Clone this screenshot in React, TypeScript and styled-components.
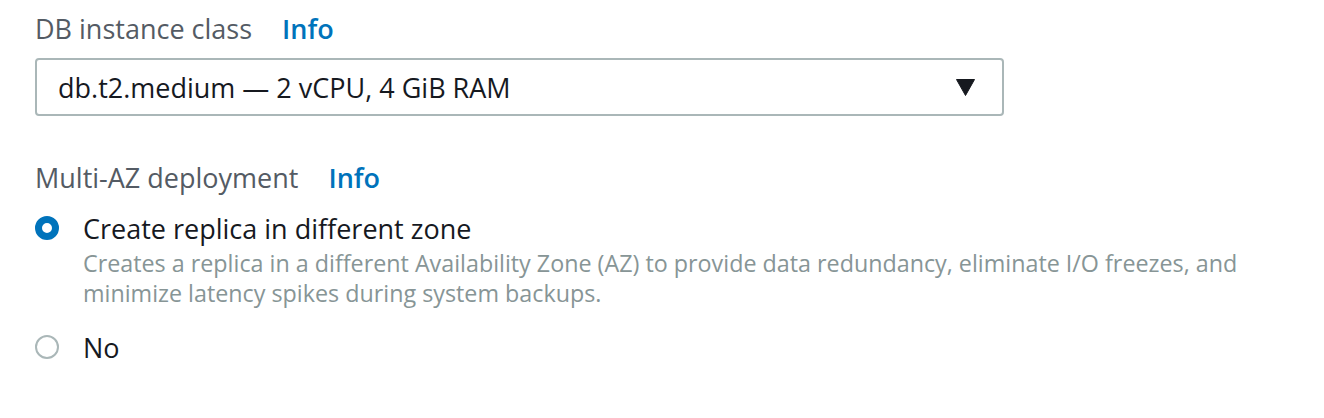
import * as React from "react";
import styled, { createGlobalStyle } from "styled-components";

const GlobalStyle = createGlobalStyle`
  body {
    margin: 0;
    background: #ffffff;
    font-family: "Open Sans", "Liberation Sans", sans-serif;
  }
`;

interface Option {
  value: string;
  label: string;
  description?: string;
}

const options: Option[] = [
  {
    value: "multi",
    label: "Create replica in different zone",
    description:
      "Creates a replica in a different Availability Zone (AZ) to provide data redundancy, eliminate I/O freezes, and minimize latency spikes during system backups.",
  },
  { value: "no", label: "No" },
];

export default function App() {
  const [selected, setSelected] = React.useState("multi");

  return (
    <Page>
      <GlobalStyle />
      <Field>
        <LabelRow>
          <Label>DB instance class</Label>
          <InfoLink>Info</InfoLink>
        </LabelRow>
        <Select>
          <SelectValue>db.t2.medium — 2 vCPU, 4 GiB RAM</SelectValue>
          <Caret viewBox="0 0 19 17" width="19" height="17">
            <path d="M0.5 0.5 H18.5 L9.5 16.5 Z" fill="#16191f" strokeLinejoin="round" stroke="#16191f" strokeWidth="1" />
          </Caret>
        </Select>
      </Field>

      <Field>
        <LabelRow>
          <Label>Multi-AZ deployment</Label>
          <InfoLink>Info</InfoLink>
        </LabelRow>
        <RadioList>
          {options.map((o) => (
            <RadioItem key={o.value} onClick={() => setSelected(o.value)}>
              <RadioRow>
                <Radio $checked={selected === o.value} />
                <RadioLabel>{o.label}</RadioLabel>
              </RadioRow>
              {o.description && <Description>{o.description}</Description>}
            </RadioItem>
          ))}
        </RadioList>
      </Field>

      <Field>
        <LabelRow>
          <Label>Storage type</Label>
          <InfoLink>Info</InfoLink>
        </LabelRow>
      </Field>
    </Page>
  );
}

const Page = styled.div`
  padding: 9px 35px 0;
  height: 418px;
  box-sizing: border-box;
  overflow: hidden;
  display: flex;
  flex-direction: column;
  gap: 42px;
`;

const Field = styled.div`
  display: flex;
  flex-direction: column;
`;

const LabelRow = styled.div`
  display: flex;
  align-items: baseline;
  gap: 30px;
  height: 40px;
  line-height: 40px;
  margin-bottom: 9px;
`;

const Label = styled.span`
  font-size: 27px;
  color: #545b64;
`;

const InfoLink = styled.a`
  font-size: 27px;
  font-weight: 600;
  color: #0073bb;
  cursor: pointer;
`;

const Select = styled.div`
  width: 969px;
  height: 58px;
  box-sizing: border-box;
  border: 2px solid #aab7b8;
  border-radius: 4px;
  display: flex;
  align-items: center;
  justify-content: space-between;
  padding: 0 27px 0 21px;
`;

const SelectValue = styled.span`
  font-size: 27px;
  color: #16191f;
`;

const Caret = styled.svg`
  display: block;
`;

const RadioList = styled.div`
  display: flex;
  flex-direction: column;
  gap: 19px;
  margin-top: 1px;
  margin-bottom: 3px;
`;

const RadioItem = styled.div`
  cursor: pointer;
`;

const RadioRow = styled.div`
  display: flex;
  align-items: center;
  gap: 24px;
  height: 40px;
`;

const Radio = styled.span<{ $checked: boolean }>`
  width: 24px;
  height: 24px;
  box-sizing: border-box;
  border-radius: 50%;
  border: ${(p) => (p.$checked ? "7.5px solid #0073bb" : "2px solid #aab7b8")};
  background: #ffffff;
  flex-shrink: 0;
`;

const RadioLabel = styled.span`
  font-size: 27px;
  color: #16191f;
`;

const Description = styled.div`
  padding-left: 48px;
  font-size: 23.3px;
  line-height: 30px;
  color: #879596;
  max-width: 1180px;
`;
